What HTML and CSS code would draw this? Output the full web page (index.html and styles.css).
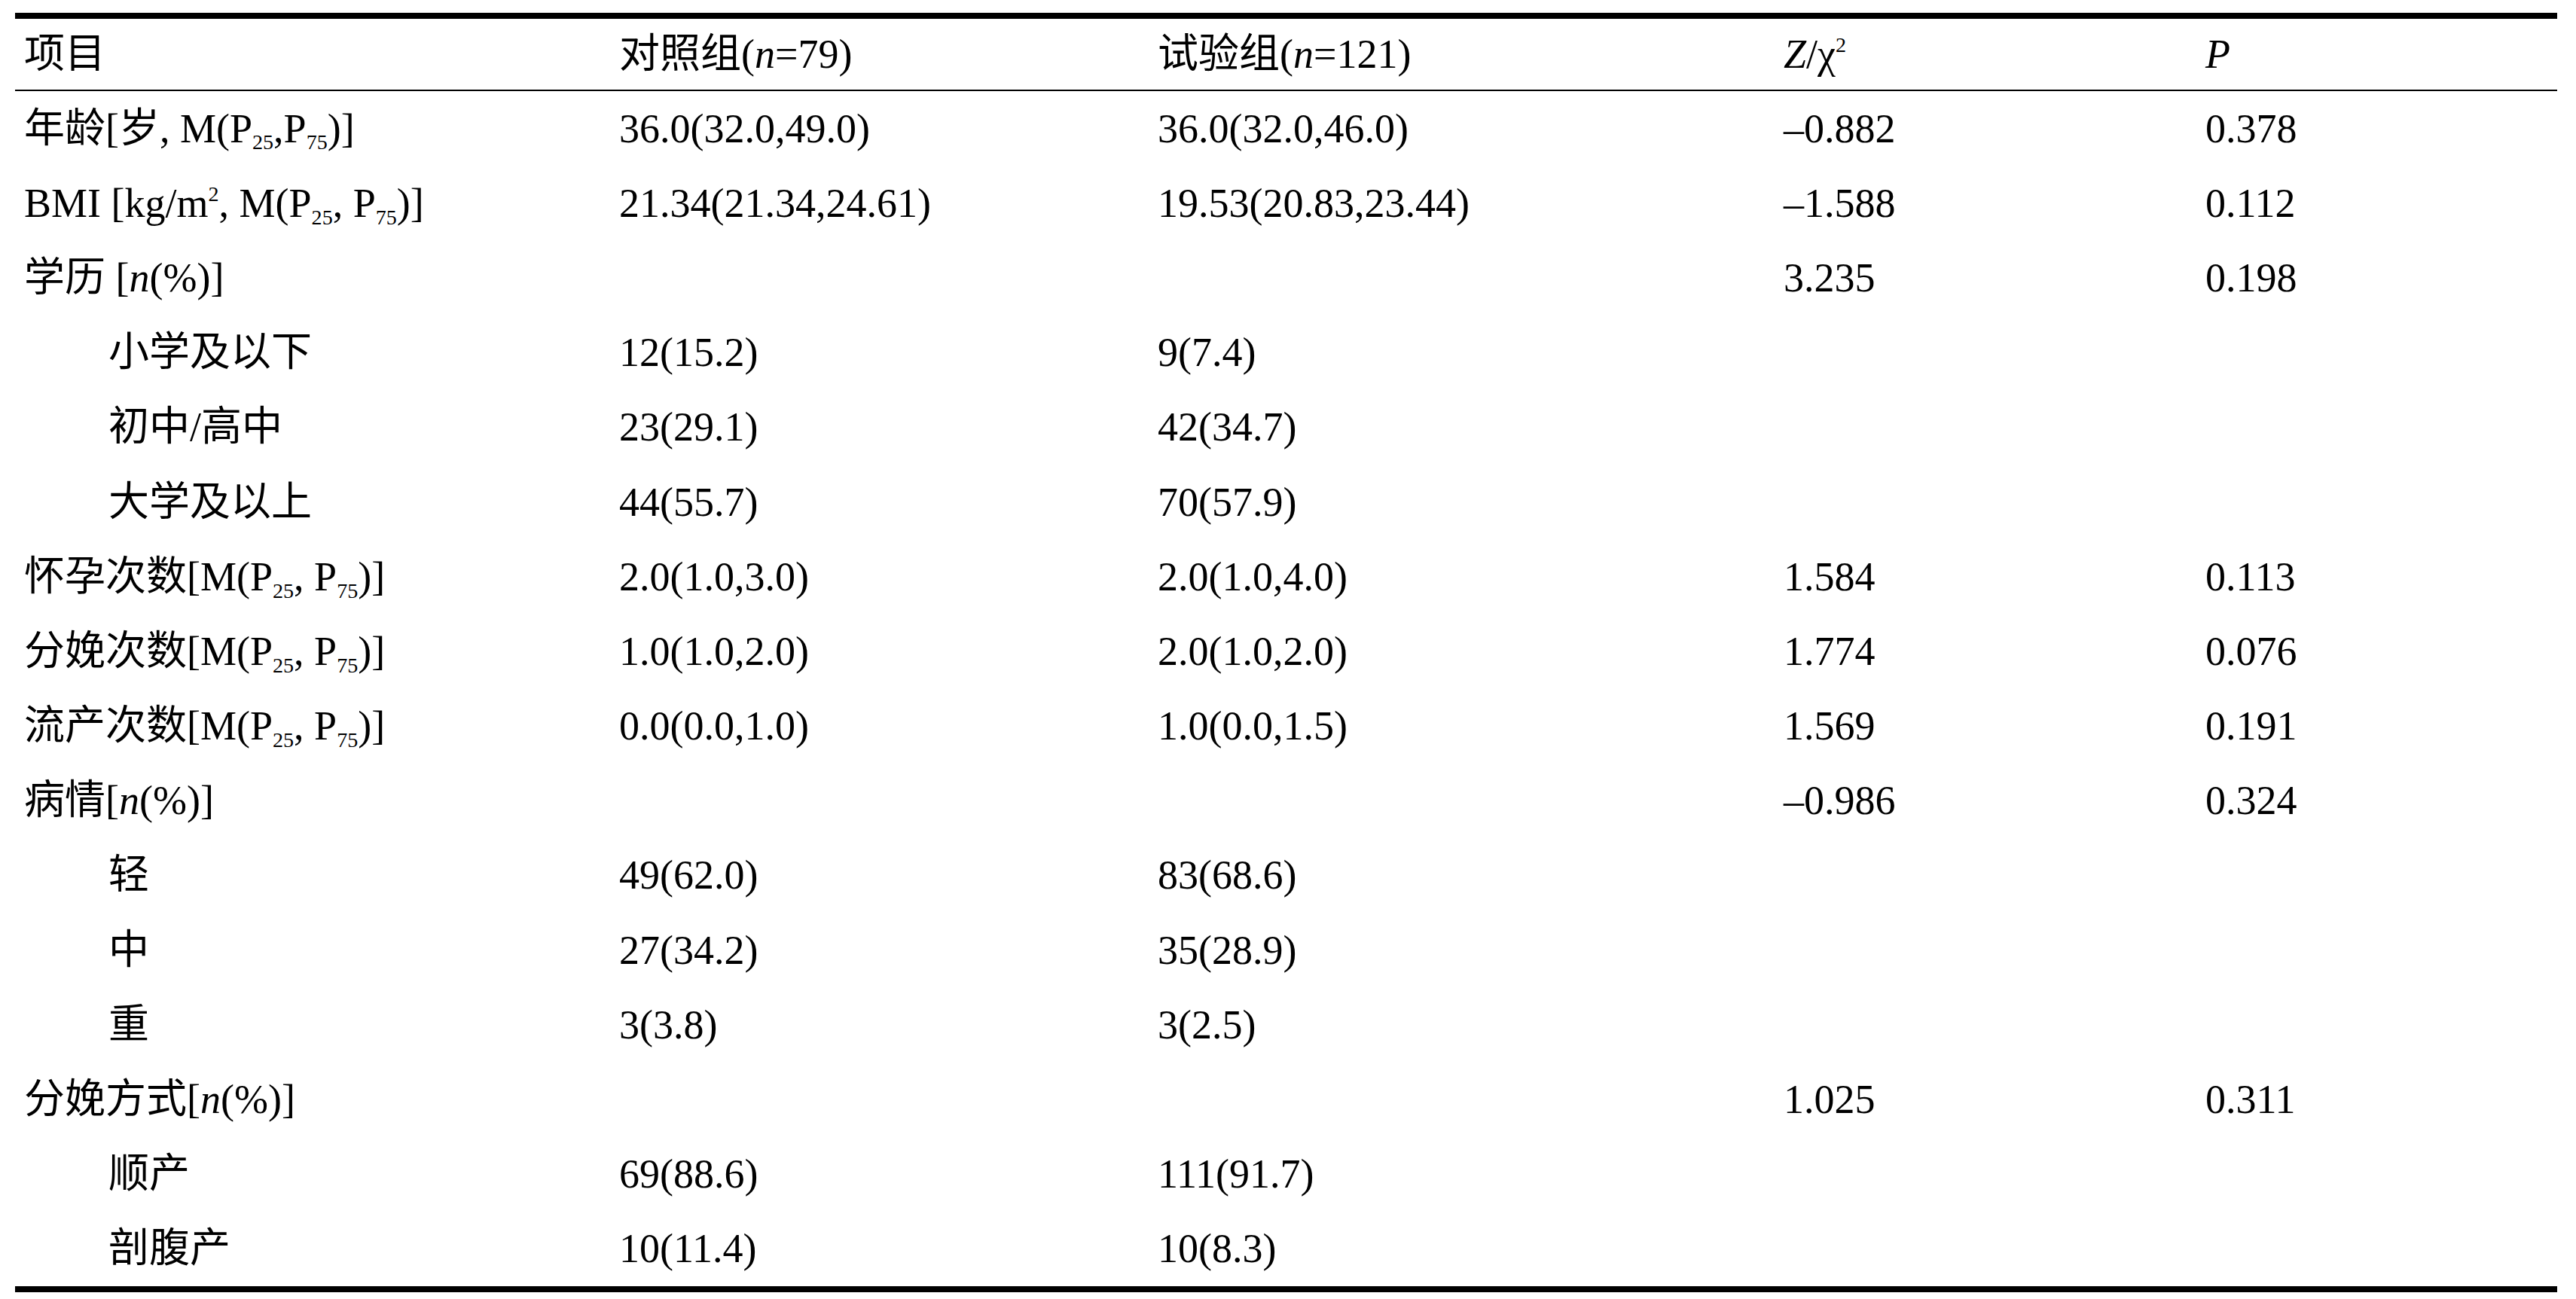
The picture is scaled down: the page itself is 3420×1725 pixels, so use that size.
FILE: index.html
```html
<!DOCTYPE html>
<html lang="zh-CN">
<head>
<meta charset="utf-8">
<title>基线资料比较</title>
<link rel="stylesheet" href="styles.css">
</head>
<body>
<div class="tbl">
  <div class="row head">
    <div class="c">项目</div>
    <div class="c">对照组(<i>n</i>=79)</div>
    <div class="c">试验组(<i>n</i>=121)</div>
    <div class="c"><i>Z</i>/χ<sup>2</sup></div>
    <div class="c"><i>P</i></div>
  </div>
  <div class="body">
    <div class="row"><div class="c">年龄[岁, M(P<sub>25</sub>,P<sub>75</sub>)]</div><div class="c">36.0(32.0,49.0)</div><div class="c">36.0(32.0,46.0)</div><div class="c">–0.882</div><div class="c">0.378</div></div>
    <div class="row"><div class="c">BMI [kg/m<sup>2</sup>, M(P<sub>25</sub>, P<sub>75</sub>)]</div><div class="c">21.34(21.34,24.61)</div><div class="c">19.53(20.83,23.44)</div><div class="c">–1.588</div><div class="c">0.112</div></div>
    <div class="row"><div class="c">学历 [<i>n</i>(%)]</div><div class="c"></div><div class="c"></div><div class="c">3.235</div><div class="c">0.198</div></div>
    <div class="row"><div class="c sub-item">小学及以下</div><div class="c">12(15.2)</div><div class="c">9(7.4)</div><div class="c"></div><div class="c"></div></div>
    <div class="row"><div class="c sub-item">初中/高中</div><div class="c">23(29.1)</div><div class="c">42(34.7)</div><div class="c"></div><div class="c"></div></div>
    <div class="row"><div class="c sub-item">大学及以上</div><div class="c">44(55.7)</div><div class="c">70(57.9)</div><div class="c"></div><div class="c"></div></div>
    <div class="row"><div class="c">怀孕次数[M(P<sub>25</sub>, P<sub>75</sub>)]</div><div class="c">2.0(1.0,3.0)</div><div class="c">2.0(1.0,4.0)</div><div class="c">1.584</div><div class="c">0.113</div></div>
    <div class="row"><div class="c">分娩次数[M(P<sub>25</sub>, P<sub>75</sub>)]</div><div class="c">1.0(1.0,2.0)</div><div class="c">2.0(1.0,2.0)</div><div class="c">1.774</div><div class="c">0.076</div></div>
    <div class="row"><div class="c">流产次数[M(P<sub>25</sub>, P<sub>75</sub>)]</div><div class="c">0.0(0.0,1.0)</div><div class="c">1.0(0.0,1.5)</div><div class="c">1.569</div><div class="c">0.191</div></div>
    <div class="row"><div class="c">病情[<i>n</i>(%)]</div><div class="c"></div><div class="c"></div><div class="c">–0.986</div><div class="c">0.324</div></div>
    <div class="row"><div class="c sub-item">轻</div><div class="c">49(62.0)</div><div class="c">83(68.6)</div><div class="c"></div><div class="c"></div></div>
    <div class="row"><div class="c sub-item">中</div><div class="c">27(34.2)</div><div class="c">35(28.9)</div><div class="c"></div><div class="c"></div></div>
    <div class="row"><div class="c sub-item">重</div><div class="c">3(3.8)</div><div class="c">3(2.5)</div><div class="c"></div><div class="c"></div></div>
    <div class="row"><div class="c">分娩方式[<i>n</i>(%)]</div><div class="c"></div><div class="c"></div><div class="c">1.025</div><div class="c">0.311</div></div>
    <div class="row"><div class="c sub-item">顺产</div><div class="c">69(88.6)</div><div class="c">111(91.7)</div><div class="c"></div><div class="c"></div></div>
    <div class="row"><div class="c sub-item">剖腹产</div><div class="c">10(11.4)</div><div class="c">10(8.3)</div><div class="c"></div><div class="c"></div></div>
  </div>
</div>
</body>
</html>
```

FILE: styles.css
```css
html, body {
  margin: 0;
  padding: 0;
  background: #fff;
}
body {
  font-family: "Liberation Serif", "Noto Sans CJK SC", serif;
  font-size: 54px;
  color: #000;
}
.tbl {
  margin: 17px 0 0 20px;
  width: 3375px;
  border-top: 8px solid #000;
  border-bottom: 8px solid #000;
}
.row {
  display: grid;
  grid-template-columns: 790px 715px 831px 560px 1fr;
  padding-left: 12px;
  height: 99.2px;
  align-items: center;
}
.row.head {
  height: 94px;
  border-bottom: 2px solid #000;
}
.c {
  white-space: nowrap;
  line-height: 1;
}
.sub-item {
  padding-left: 112px;
}
i {
  font-style: italic;
}
sub, sup {
  font-size: 0.52em;
  line-height: 0;
  position: relative;
}
sub {
  vertical-align: -0.35em;
}
sup {
  vertical-align: 0.75em;
}
```
